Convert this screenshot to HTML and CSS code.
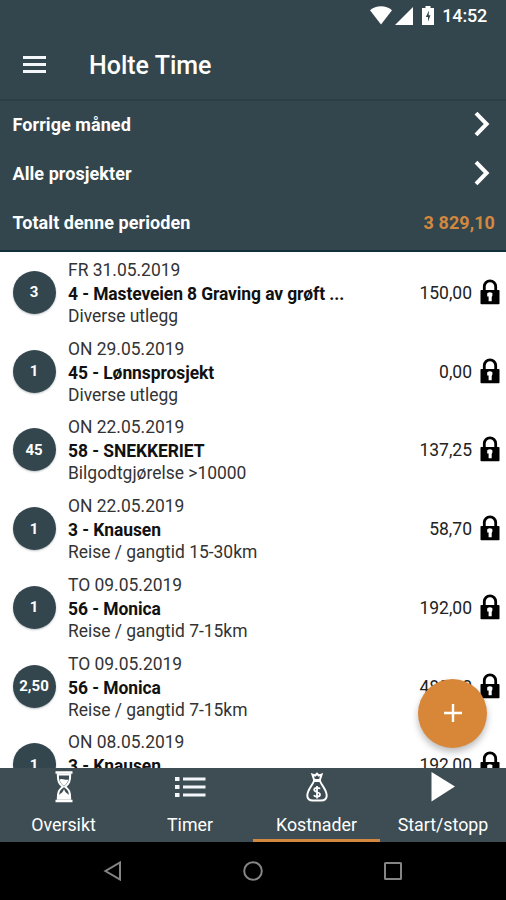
FILE: index.html
```html
<!DOCTYPE html>
<html lang="no">
<head>
<meta charset="utf-8">
<title>Holte Time</title>
<link rel="stylesheet" href="styles.css">
</head>
<body>
<svg class="defs" aria-hidden="true">
  <symbol id="lock" viewBox="0 0 20 26">
    <path d="M4.300 12V7.600a5.700 5.700 0 0 1 11.400 0V12" fill="none" stroke="#000" stroke-width="2.800"/>
    <rect x="0.500" y="11" width="19" height="14.200" rx="0.800"/>
    <path d="M7.200 14.200q2.800-1.800 5.200 0v2.300l-.7 1.500v4.200H8.600v-4.700H7.200z" fill="#fff"/>
  </symbol>
  <symbol id="chevron" viewBox="0 0 18 26">
    <path d="M3 2.200L13.600 13 3 23.800" fill="none" stroke="#fff" stroke-width="4"/>
  </symbol>
</svg>
<div class="screen">
  <header class="top">
    <div class="status">
      <svg class="wifi" viewBox="0 0 22 19"><path d="M0 4.200C6-1.200 16-1.200 22 4.200L11 18.500z" fill="#fff"/></svg>
      <svg class="signal" viewBox="0 0 18 18"><path d="M18 0v18H0z" fill="#fff"/></svg>
      <svg class="battery" viewBox="0 0 12 19"><path d="M3.500 0h5v2H12v17H0V2h3.500z" fill="#fff"/><path d="M7 4.500L3.800 11h2.200v4.500L8.500 9.200H6.700z" fill="#33464d"/></svg>
      <span class="clock">14:52</span>
    </div>
    <div class="appbar">
      <svg class="menu" viewBox="0 0 23 17"><path d="M0 1.500h23M0 8.500h23M0 15.500h23" stroke="#f4f7fa" stroke-width="2.900"/></svg>
      <h1 class="title">Holte Time</h1>
    </div>
  </header>
  <section class="filters">
    <div class="filter"><span>Forrige måned</span><svg class="chevron"><use href="#chevron"/></svg></div>
    <div class="filter"><span>Alle prosjekter</span><svg class="chevron"><use href="#chevron"/></svg></div>
    <div class="filter"><span>Totalt denne perioden</span><span class="total">3 829,10</span></div>
  </section>
  <main class="list">
    <article class="row"><span class="badge">3</span><div class="info"><div class="date">FR 31.05.2019</div><div class="name long">4 - Masteveien 8 Graving av grøft ...</div><div class="kind">Diverse utlegg</div></div><span class="amount">150,00</span><svg class="lock"><use href="#lock"/></svg></article>
    <article class="row"><span class="badge">1</span><div class="info"><div class="date">ON 29.05.2019</div><div class="name">45 - Lønnsprosjekt</div><div class="kind">Diverse utlegg</div></div><span class="amount">0,00</span><svg class="lock"><use href="#lock"/></svg></article>
    <article class="row"><span class="badge">45</span><div class="info"><div class="date">ON 22.05.2019</div><div class="name">58 - SNEKKERIET</div><div class="kind">Bilgodtgjørelse &gt;10000</div></div><span class="amount">137,25</span><svg class="lock"><use href="#lock"/></svg></article>
    <article class="row"><span class="badge">1</span><div class="info"><div class="date">ON 22.05.2019</div><div class="name">3 - Knausen</div><div class="kind">Reise / gangtid 15-30km</div></div><span class="amount">58,70</span><svg class="lock"><use href="#lock"/></svg></article>
    <article class="row"><span class="badge">1</span><div class="info"><div class="date">TO 09.05.2019</div><div class="name">56 - Monica</div><div class="kind">Reise / gangtid 7-15km</div></div><span class="amount">192,00</span><svg class="lock"><use href="#lock"/></svg></article>
    <article class="row"><span class="badge">2,50</span><div class="info"><div class="date">TO 09.05.2019</div><div class="name">56 - Monica</div><div class="kind">Reise / gangtid 7-15km</div></div><span class="amount">480,00</span><svg class="lock"><use href="#lock"/></svg></article>
    <article class="row"><span class="badge">1</span><div class="info"><div class="date">ON 08.05.2019</div><div class="name">3 - Knausen</div></div><span class="amount">192,00</span><svg class="lock"><use href="#lock"/></svg></article>
    <button class="fab"><svg viewBox="0 0 18 18"><path d="M9 0v18M0 9h18" stroke="#fff" stroke-width="2.400"/></svg></button>
  </main>
  <nav class="tabs">
    <div class="tab">
      <svg viewBox="0 0 32 32"><path d="M7.500 1.500h17M7.500 30h17" stroke="#fff" stroke-width="2.400"/><path d="M9.800 3.500c0 7 1.200 9 5 12.200-3.800 3-5 5-5 12h12.400c0-7-1.200-9-5-12 3.800-3.200 5-5.200 5-12.200z" fill="none" stroke="#fff" stroke-width="2"/><path d="M11.500 8.500c2.800-1.800 6.200 1.200 9 0-1 3-2.300 4.800-4.500 6.500-2.200-1.700-3.800-3.500-4.500-6.500zM10 28v-3.500c1.500-1.500 5-2.500 6-6.500 1 4 4.500 5 6 6.500V28z" fill="#fff"/></svg>
      <span>Oversikt</span>
    </div>
    <div class="tab">
      <svg viewBox="0 0 32 32"><path d="M1 8h4.500M1 16h4.500M1 24h4.500" stroke="#f4f7fa" stroke-width="4"/><path d="M9 8h22.500M9 16h22.500M9 24h22.500" stroke="#f4f7fa" stroke-width="3"/></svg>
      <span>Timer</span>
    </div>
    <div class="tab active">
      <svg viewBox="0 0 32 32" fill="none" stroke="#fff" stroke-width="2"><path d="M13 8.500L11.400 3.500l2.800 1L16 2.600l1.800 1.900 2.800-1L19 8.500"/><path d="M12 9.500h8" stroke-width="3"/><path d="M13 10C11 15 6.300 19 6.300 24.500c0 4 2.700 5 5.700 5h8c3 0 5.700-1 5.700-5C25.700 19 21 15 19 10"/><path d="M19 17.800c-1-1.400-5.800-1.600-5.800 1s5.800 1.800 5.800 4.700c0 2.700-5 2.600-6.200.8M16 15v12.500" stroke-width="1.800"/></svg>
      <span>Kostnader</span>
    </div>
    <div class="tab">
      <svg viewBox="0 0 32 32"><path d="M4.500 1L28 15.500 4.500 30.500z" fill="#fff"/></svg>
      <span>Start/stopp</span>
    </div>
  </nav>
  <footer class="system">
    <svg viewBox="0 0 20 20"><path d="M17 1.500v17L2.500 10z"/></svg>
    <svg viewBox="0 0 20 20"><circle cx="10" cy="10" r="8.800"/></svg>
    <svg viewBox="0 0 20 20"><rect x="2" y="2" width="16" height="16" rx="0.500"/></svg>
  </footer>
</div>
</body>
</html>
```
FILE: styles.css
```css
* { box-sizing: border-box; }
body { margin: 0; font-family: Roboto, sans-serif; background: #000; }
.defs { position: absolute; width: 0; height: 0; }
.screen { width: 506px; height: 900px; display: flex; flex-direction: column; overflow: hidden; }
.top { height: 101px; background: #33464d; border-bottom: 2px solid #2c3d44; }
.status { height: 31px; display: flex; align-items: center; justify-content: flex-end; padding-right: 19px; color: #fff; }
.wifi { width: 22px; height: 19px; margin-right: 3px; }
.signal { width: 18px; height: 18px; margin-right: 9px; }
.battery { width: 12px; height: 19px; margin-right: 8px; }
.clock { font-size: 18px; font-weight: 500; letter-spacing: -0.2px; }
.appbar { display: flex; align-items: center; height: 68px; padding-left: 23px; }
.menu { width: 23px; height: 17px; margin: 0 43px 1px 0; }
.title { margin: 2px 0 0; color: #fff; font-size: 25px; font-weight: 500; line-height: 30px; }
.filters { height: 151px; padding: 0 11px 0 12.500px; background: #33464d; color: #fff; border-bottom: 2px solid #123039; }
.filter { height: 49.200px; padding-bottom: 2px; display: flex; align-items: center; justify-content: space-between; font-size: 18px; font-weight: 700; letter-spacing: 0.070px; }
.chevron { width: 18px; height: 26px; margin: 0 4px 2px 0; }
.total { color: #d2883f; }
.list { position: relative; height: 516px; padding-top: 1px; background: #fff; overflow: hidden; }
.row { height: 78.750px; display: flex; align-items: center; padding: 0 6px 0 12.500px; }
.badge { flex: none; width: 43px; height: 43px; margin-right: 12.500px; border-radius: 50%; background: #33464d; color: #fff; display: flex; align-items: center; justify-content: center; font-size: 15px; font-weight: 700; box-shadow: 0 1px 2px #33464d55; }
.info { flex: 1; height: 69px; white-space: nowrap; color: #333; font-size: 17.450px; }
.date { line-height: 24px; }
.name { line-height: 24px; color: #111; font-weight: 700; letter-spacing: -0.060px; }
.long { letter-spacing: -0.100px; }
.kind { line-height: 20px; }
.amount { color: #222; font-size: 17.500px; margin: 1px 8px 0 0; }
.lock { flex: none; width: 20px; height: 26px; margin-bottom: 1px; }
.fab { position: absolute; right: 19px; bottom: 20.500px; width: 69px; height: 69px; border: 0; border-radius: 50%; padding: 0; display: flex; align-items: center; justify-content: center; background: #d88739; box-shadow: 0 4px 7px #0004; }
.fab svg { width: 18px; height: 18px; }
.tabs { height: 74px; display: grid; grid-template-columns: 127px 126px 127px 126px; background: #3d4d53; color: #fff; }
.tab { display: flex; flex-direction: column; align-items: center; padding-top: 3px; border-bottom: 3px solid transparent; font-size: 17.800px; }
.tab svg { width: 32px; height: 32px; margin-bottom: 10px; }
.tab span { line-height: 23px; }
.active { border-color: #d2883f; }
.system { height: 58px; background: #000; display: flex; align-items: center; justify-content: center; gap: 120px; }
.system svg { width: 20px; height: 20px; fill: none; stroke: #858585; stroke-width: 2; }
```
